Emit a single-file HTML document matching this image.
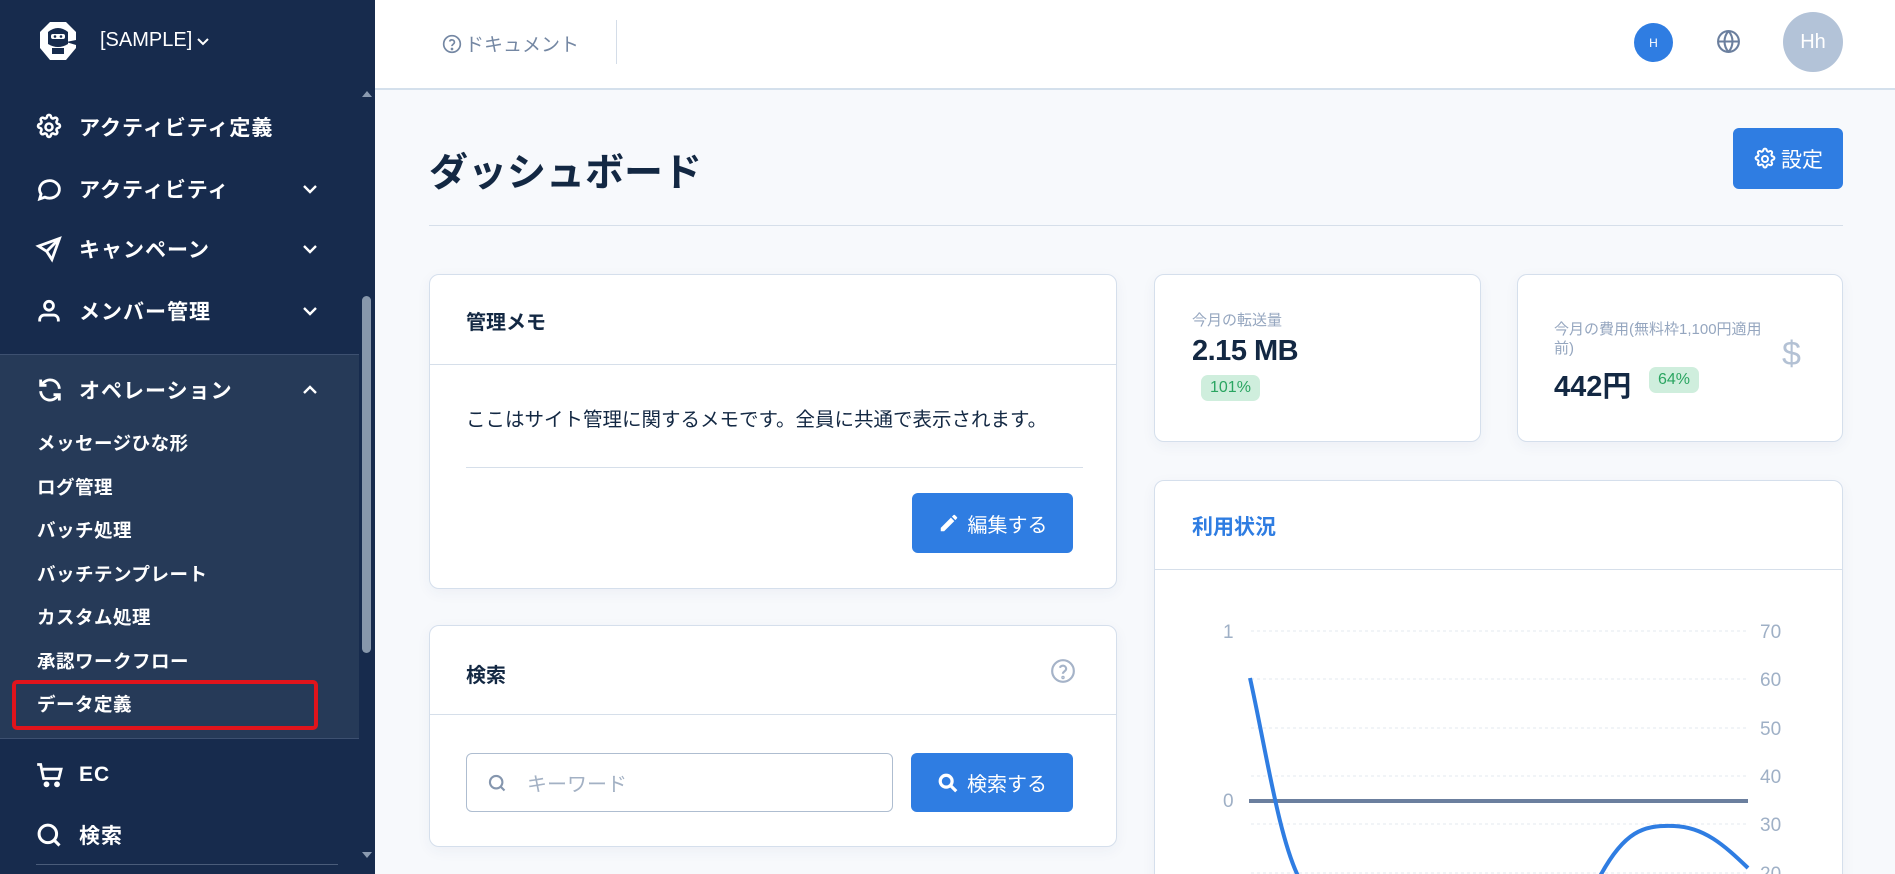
<!DOCTYPE html>
<html style="overflow:hidden;height:874px"><head><meta charset="utf-8"><style>
*{box-sizing:border-box;margin:0;padding:0}
html,body{overflow:hidden}
body{width:1895px;height:874px;background:#f7f9fc;font-family:"Liberation Sans","Noto Sans CJK JP",sans-serif;position:relative}
.a{position:absolute}
.sb{left:0;top:0;width:375px;height:874px;background:#172b4d;color:#fff}
.mi{position:absolute;left:0;width:360px;height:40px;display:flex;align-items:center;font-size:21px;font-weight:600;letter-spacing:1px}
.mi .ic{position:absolute;left:35px}
.mi span{position:absolute;left:79px}
.mi .chev{position:absolute;left:302px}
.sub{position:absolute;left:37px;font-size:18.5px;font-weight:600;letter-spacing:.5px;transform:translateY(-50%)}
.card{position:absolute;background:#fff;border:1px solid #d5dfec;border-radius:10px;box-shadow:0 4px 14px rgba(30,60,110,.05)}
.btn{position:absolute;background:#2f7de2;color:#fff;border-radius:6px;display:flex;align-items:center;justify-content:center;font-size:20px;gap:8px}
</style></head><body>
<div class="a sb">
  <svg class="a" style="left:38px;top:20px" width="40" height="42" viewBox="0 0 40 42"><path d="M12 2h16l10 10v16l-10 12H12L2 28V12z" fill="#fff"/><path d="M10 12q10-8 20 0v12q-10 6-20 0z" fill="#172b4d"/><rect x="13" y="14" width="14" height="5" rx="2" fill="#fff"/><circle cx="17" cy="16.5" r="1.3" fill="#172b4d"/><circle cx="23" cy="16.5" r="1.3" fill="#172b4d"/><path d="M28 22l10-2v5z" fill="#172b4d"/><rect x="14" y="28" width="12" height="6" fill="#172b4d"/></svg>
  <div class="a" style="left:100px;top:29px;font-size:20px;color:#fff">[SAMPLE]<svg width="14" height="10" viewBox="0 0 14 10" style="margin-left:4px"><path d="M2 3l5 5 5-5" stroke="#fff" stroke-width="2" fill="none"/></svg></div>
  <div class="a" style="left:362px;top:86px;width:0;height:0;border:5px solid transparent;border-bottom:6px solid #8a9ab0"></div>
  <div class="a" style="left:362px;top:852px;width:0;height:0;border:5px solid transparent;border-top:6px solid #8a9ab0"></div>
  <div class="a" style="left:362px;top:296px;width:9px;height:357px;border-radius:5px;background:#8797ab"></div>
  <div class="mi" style="top:107px"><svg class="ic" width="28" height="28" viewBox="0 0 24 24" fill="none" stroke="#fff" stroke-width="2.2"><circle cx="12" cy="12" r="3"/><path d="M10.3 3.3a1.7 1.7 0 013.4 0 1.7 1.7 0 002.6 1.1 1.7 1.7 0 012.4 2.4 1.7 1.7 0 001 2.6 1.7 1.7 0 010 3.4 1.7 1.7 0 00-1 2.6 1.7 1.7 0 01-2.4 2.4 1.7 1.7 0 00-2.6 1 1.7 1.7 0 01-3.4 0 1.7 1.7 0 00-2.6-1 1.7 1.7 0 01-2.4-2.4 1.7 1.7 0 00-1-2.6 1.7 1.7 0 010-3.4 1.7 1.7 0 001-2.6 1.7 1.7 0 012.4-2.4 1.7 1.7 0 002.6-1.1z"/></svg><span>アクティビティ定義</span></div>
  <div class="mi" style="top:169px"><svg class="ic" width="28" height="28" viewBox="0 0 24 24" fill="none" stroke="#fff" stroke-width="2.4"><path d="M4 20.5l1.2-4.2A8.5 7.5 0 1 1 8.5 19z"/></svg><span>アクティビティ</span><svg class="chev" width="16" height="12" viewBox="0 0 16 12"><path d="M2 3l6 6 6-6" stroke="#fff" stroke-width="2.4" fill="none"/></svg></div>
  <div class="mi" style="top:229px"><svg class="ic" width="28" height="28" viewBox="0 0 24 24" fill="none" stroke="#fff" stroke-width="2.4"><path d="M10 14L21 3M21 3l-6.5 18-4.5-7-7-4.5z"/></svg><span>キャンペーン</span><svg class="chev" width="16" height="12" viewBox="0 0 16 12"><path d="M2 3l6 6 6-6" stroke="#fff" stroke-width="2.4" fill="none"/></svg></div>
  <div class="mi" style="top:291px"><svg class="ic" width="28" height="28" viewBox="0 0 24 24" fill="none" stroke="#fff" stroke-width="2.4"><circle cx="12" cy="7.5" r="3.8"/><path d="M4 21v-1.5a4 4 0 014-4h8a4 4 0 014 4V21"/></svg><span>メンバー管理</span><svg class="chev" width="16" height="12" viewBox="0 0 16 12"><path d="M2 3l6 6 6-6" stroke="#fff" stroke-width="2.4" fill="none"/></svg></div>
  <div class="a" style="left:0;top:354px;width:359px;height:385px;background:#263a58;border-top:1px solid #3d5070;border-bottom:1px solid #3d5070"></div>
  <div class="mi" style="top:370px"><svg class="ic" width="30" height="28" viewBox="0 0 24 24" fill="none" stroke="#fff" stroke-width="2.4"><path d="M20 11A8 8 0 0 0 5 7.5M4 3v5h5M4 13a8 8 0 0 0 15 3.5M20 21v-5h-5"/></svg><span>オペレーション</span><svg class="chev" width="16" height="12" viewBox="0 0 16 12"><path d="M2 9l6-6 6 6" stroke="#fff" stroke-width="2.4" fill="none"/></svg></div>
  <div class="sub" style="top:443px">メッセージひな形</div>
  <div class="sub" style="top:487px">ログ管理</div>
  <div class="sub" style="top:530px">バッチ処理</div>
  <div class="sub" style="top:574px">バッチテンプレート</div>
  <div class="sub" style="top:617px">カスタム処理</div>
  <div class="sub" style="top:661px">承認ワークフロー</div>
  <div class="sub" style="top:704px">データ定義</div>
  <div class="a" style="left:12px;top:680px;width:306px;height:50px;border:4px solid #e0141c;border-radius:5px"></div>
  <div class="mi" style="top:755px"><svg class="ic" width="30" height="28" viewBox="0 0 24 24" fill="none" stroke="#fff" stroke-width="2.4"><path d="M1 3h3l2.5 12h13l2-8H6"/><circle cx="9" cy="20" r="1.3" fill="#fff"/><circle cx="18" cy="20" r="1.3" fill="#fff"/></svg><span>EC</span></div>
  <div class="mi" style="top:815px"><svg class="ic" width="28" height="28" viewBox="0 0 24 24" fill="none" stroke="#fff" stroke-width="2.6"><circle cx="11" cy="11" r="7.5"/><path d="M16.5 16.5L21 21"/></svg><span>検索</span></div>
  <div class="a" style="left:36px;top:864px;width:302px;height:1px;background:#4a5c7a"></div>
</div>
<div class="a" style="left:375px;top:0;width:1520px;height:90px;background:#fff;border-bottom:2px solid #d4e0ec"></div>
<div class="a" style="left:442px;top:30px;color:#7487a3;font-size:19px;display:flex;align-items:center;gap:3px"><svg width="20" height="20" viewBox="0 0 24 24" fill="none" stroke="#7487a3" stroke-width="2"><circle cx="12" cy="12" r="10"/><path d="M9.1 9a3 3 0 015.8 1c0 2-3 2.5-3 4.5"/><circle cx="12" cy="18" r=".6" fill="#7487a3"/></svg>ドキュメント</div>
<div class="a" style="left:616px;top:20px;width:1px;height:44px;background:#d4dde8"></div>
<div class="a" style="left:1634px;top:23px;width:39px;height:39px;border-radius:50%;background:#2f7de2;color:#fff;font-size:12px;display:flex;align-items:center;justify-content:center">H</div>
<svg class="a" style="left:1716px;top:29px" width="25" height="25" viewBox="0 0 24 24" fill="none" stroke="#6b7f9e" stroke-width="2"><circle cx="12" cy="12" r="10"/><path d="M2 12h20M12 2a15 15 0 010 20M12 2a15 15 0 000 20"/></svg>
<div class="a" style="left:1783px;top:12px;width:60px;height:60px;border-radius:50%;background:#b3c3d8;color:#fff;font-size:20px;display:flex;align-items:center;justify-content:center">Hh</div>
<div class="a" style="left:429px;top:142px;font-size:39px;font-weight:700;color:#132843">ダッシュボード</div>
<div class="btn" style="left:1733px;top:128px;width:110px;height:61px;font-size:21px;gap:4px"><svg width="24" height="24" viewBox="0 0 24 24" fill="none" stroke="#fff" stroke-width="2"><circle cx="12" cy="12" r="3"/><path d="M10.3 3.3a1.7 1.7 0 013.4 0 1.7 1.7 0 002.6 1.1 1.7 1.7 0 012.4 2.4 1.7 1.7 0 001 2.6 1.7 1.7 0 010 3.4 1.7 1.7 0 00-1 2.6 1.7 1.7 0 01-2.4 2.4 1.7 1.7 0 00-2.6 1 1.7 1.7 0 01-3.4 0 1.7 1.7 0 00-2.6-1 1.7 1.7 0 01-2.4-2.4 1.7 1.7 0 00-1-2.6 1.7 1.7 0 010-3.4 1.7 1.7 0 001-2.6 1.7 1.7 0 012.4-2.4 1.7 1.7 0 002.6-1.1z"/></svg>設定</div>
<div class="a" style="left:429px;top:225px;width:1414px;height:1px;background:#d6dfea"></div>

<div class="card" style="left:429px;top:274px;width:688px;height:315px">
  <div class="a" style="left:36px;top:31px;font-size:20px;font-weight:700;color:#132843">管理メモ</div>
  <div class="a" style="left:0;top:89px;width:100%;height:1px;background:#d6dfea"></div>
  <div class="a" style="left:36px;top:128px;font-size:19.5px;color:#132843">ここはサイト管理に関するメモです。全員に共通で表示されます。</div>
  <div class="a" style="left:36px;top:192px;width:617px;height:1px;background:#d6dfea"></div>
  <div class="btn" style="left:482px;top:218px;width:161px;height:60px"><svg width="22" height="22" viewBox="0 0 24 24" fill="#fff"><path d="M3 17.3V21h3.7L17.8 9.9l-3.7-3.7zM20.7 7a1 1 0 000-1.4l-2.3-2.3a1 1 0 00-1.4 0l-1.8 1.8 3.7 3.7z"/></svg>編集する</div>
</div>
<div class="card" style="left:429px;top:625px;width:688px;height:222px">
  <div class="a" style="left:36px;top:33px;font-size:20px;font-weight:700;color:#132843">検索</div>
  <svg class="a" style="left:620px;top:32px" width="26" height="26" viewBox="0 0 24 24" fill="none" stroke="#a5b3c8" stroke-width="2"><circle cx="12" cy="12" r="10"/><path d="M9.1 9a3 3 0 015.8 1c0 2-3 2.5-3 4.5"/><circle cx="12" cy="18" r=".6"/></svg>
  <div class="a" style="left:0;top:88px;width:100%;height:1px;background:#d6dfea"></div>
  <div class="a" style="left:36px;top:127px;width:427px;height:59px;border:1px solid #aebdd0;border-radius:6px;display:flex;align-items:center;color:#a3b1c4;font-size:20px"><svg style="margin:0 20px 0 20px" width="20" height="20" viewBox="0 0 24 24" fill="none" stroke="#8596ae" stroke-width="2.5"><circle cx="11" cy="11" r="7.5"/><path d="M16.5 16.5L21 21"/></svg>キーワード</div>
  <div class="btn" style="left:481px;top:127px;width:162px;height:59px"><svg width="22" height="22" viewBox="0 0 24 24" fill="none" stroke="#fff" stroke-width="3.5"><circle cx="10" cy="10" r="6.5"/><path d="M15 15l6 6"/></svg>検索する</div>
</div>

<div class="card" style="left:1154px;top:274px;width:327px;height:168px">
  <div class="a" style="left:37px;top:34px;font-size:15px;color:#95a6bf">今月の転送量</div>
  <div class="a" style="left:37px;top:60px;font-size:29px;font-weight:600;color:#132843;letter-spacing:-.5px">2.15 MB</div>
  <div class="a" style="left:46px;top:100px;padding:4px 9px;background:#cfeedd;color:#2aa561;border-radius:7px;font-size:16px">101%</div>
</div>
<div class="card" style="left:1517px;top:274px;width:326px;height:168px">
  <div class="a" style="left:36px;top:45px;width:215px;font-size:15px;line-height:19px;color:#95a6bf">今月の費用(無料枠1,100円適用前)</div>
  <div class="a" style="left:36px;top:88px;font-size:29px;font-weight:600;color:#132843">442円</div>
  <div class="a" style="left:131px;top:92px;padding:4px 9px;background:#cfeedd;color:#2aa561;border-radius:7px;font-size:16px">64%</div>
  <div class="a" style="left:264px;top:60px;font-size:34px;color:#b3c1d4">$</div>
</div>
<div class="card" style="left:1154px;top:480px;width:689px;height:420px">
  <div class="a" style="left:37px;top:30px;font-size:21px;font-weight:700;color:#2f7de2">利用状況</div>
  <div class="a" style="left:0;top:88px;width:100%;height:1px;background:#d6dfea"></div>
</div>
<svg class="a" style="left:1154px;top:570px" width="689" height="304">
  <g stroke="#e3e8ef" stroke-dasharray="3 3" stroke-width="1"><path d="M97 61H592M97 109H592M97 158H592M97 206H592M97 254H592M97 303H592"/></g>
  <g fill="#9fb0c6" font-size="19" font-family="Liberation Sans,sans-serif"><text x="69" y="68">1</text><text x="69" y="237">0</text><text x="606" y="68">70</text><text x="606" y="116">60</text><text x="606" y="165">50</text><text x="606" y="213">40</text><text x="606" y="261">30</text><text x="606" y="310">20</text></g>
  <path d="M95 231H594" stroke="#6b7f9e" stroke-width="4"/>
  <path d="M96 108C112 180 125 270 146 310" stroke="#2f7de2" stroke-width="4" fill="none"/>
  <path d="M444 310C470 260 490 255 520 256C550 257 570 275 594 298" stroke="#2f7de2" stroke-width="4" fill="none"/>
</svg>
</body></html>
